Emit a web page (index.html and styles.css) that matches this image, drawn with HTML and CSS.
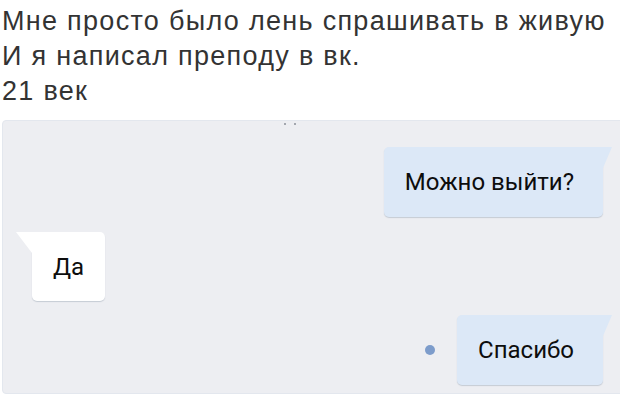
FILE: index.html
```
<!doctype html>
<html lang="ru">
<head>
    <meta charset="UTF-8">
    <title>21 век</title>
    <link rel="stylesheet" href="styles.css">
</head>
<body>
    <p class="post-text">Мне просто было лень спрашивать в живую<br>И я написал преподу в вк.<br>21 век</p>
    <div class="chat">
        <div class="typing"><span></span><span></span></div>
        <div class="row row-out">
            <div class="bubble bubble-out">Можно выйти?</div>
        </div>
        <div class="row row-in">
            <div class="bubble bubble-in">Да</div>
        </div>
        <div class="row row-out">
            <span class="unread"></span>
            <div class="bubble bubble-out">Спасибо</div>
        </div>
    </div>
</body>
</html>
```
FILE: styles.css
```
*{
    margin:0;
    padding:0;
    box-sizing: border-box;
}
body{
    width:620px;
    height:400px;
    overflow: hidden;
    background-color: #fff;
}
.post-text{
    padding: 4px 0 0 2px;
    font-family: "Liberation Sans", Arial, sans-serif;
    font-size: 27px;
    line-height: 35px;
    letter-spacing: 1.3px;
    color: #333;
}
.chat{
    position: relative;
    margin: 11px -6px 0 2px;
    height: 274px;
    padding: 26px 22px 0 29px;
    background-color: #edeef2;
    border: 1px solid #e3e7ee;
    border-radius: 4px;
    font-family: Roboto, "Liberation Sans", sans-serif;
    font-size: 24px;
    color: #0d0d0d;
}
.typing{
    position: absolute;
    top: 2px;
    left: 281px;
    display: flex;
    gap: 8px;
}
.typing span{
    width: 2px;
    height: 2px;
    border-radius: 50%;
    background-color: #8a8f98;
}
.row{
    display: flex;
    align-items: center;
    height: 70px;
    margin-bottom: 15px;
}
.row-in{
    height: 69px;
    margin-bottom: 14px;
}
.row-out{
    justify-content: flex-end;
}
.bubble{
    position: relative;
    display: flex;
    align-items: center;
    height: 100%;
    border-radius: 5px;
    box-shadow: 0 1px 1px rgba(60, 80, 110, 0.22);
}
.bubble-out{
    padding: 0 29px 0 21px;
    background-color: #dce8f7;
    border-top-right-radius: 0;
}
.bubble-out::after{
    content: "";
    position: absolute;
    top: 0;
    right: -9px;
    width: 9px;
    height: 21px;
    background-color: #dce8f7;
    clip-path: polygon(0 0, 100% 0, 0 100%);
}
.bubble-in{
    padding: 0 21px;
    background-color: #fff;
    border-top-left-radius: 0;
}
.bubble-in::before{
    content: "";
    position: absolute;
    top: 0;
    left: -16px;
    width: 16px;
    height: 21px;
    background-color: #fff;
    clip-path: polygon(0 0, 100% 0, 100% 100%);
}
.unread{
    width: 10px;
    height: 10px;
    margin-right: 22px;
    border-radius: 50%;
    background-color: #7d9ccb;
}
```
